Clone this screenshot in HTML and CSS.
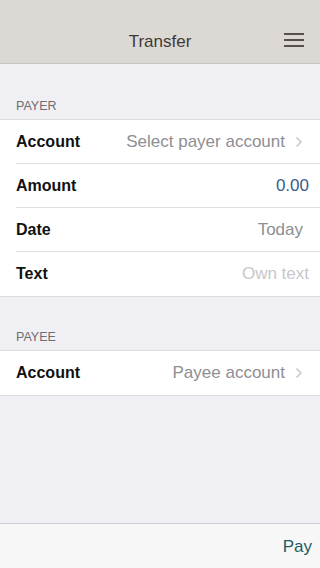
FILE: index.html
```html
<!DOCTYPE html>
<html lang="en">
<head>
  <meta charset="UTF-8">
  <meta name="viewport" content="width=device-width, initial-scale=1.0">
  <title>Transfer</title>
  <link rel="stylesheet" href="styles.css">
</head>
<body>
  <div class="screen">
    <header class="navbar">
      <h1 class="navbar-title">Transfer</h1>
      <button class="menu-btn" aria-label="Menu">
        <span></span><span></span><span></span>
      </button>
    </header>

    <main class="content">
      <h2 class="section-label">PAYER</h2>
      <ul class="group">
        <li class="row">
          <span class="row-label">Account</span>
          <span class="row-value">Select payer account</span>
          <svg class="chevron" width="8" height="12" viewBox="0 0 8 12"><polyline points="1.5,1.5 6,6 1.5,10.5"/></svg>
        </li>
        <li class="row">
          <span class="row-label">Amount</span>
          <span class="row-value row-value-amount">0.00</span>
        </li>
        <li class="row">
          <span class="row-label">Date</span>
          <span class="row-value row-value-date">Today</span>
        </li>
        <li class="row">
          <span class="row-label">Text</span>
          <span class="row-value row-value-placeholder">Own text</span>
        </li>
      </ul>

      <h2 class="section-label">PAYEE</h2>
      <ul class="group">
        <li class="row">
          <span class="row-label">Account</span>
          <span class="row-value">Payee account</span>
          <svg class="chevron" width="8" height="12" viewBox="0 0 8 12"><polyline points="1.5,1.5 6,6 1.5,10.5"/></svg>
        </li>
      </ul>
    </main>

    <footer class="toolbar">
      <button class="pay-btn">Pay</button>
    </footer>
  </div>
</body>
</html>
```

FILE: styles.css
```css
*{
  box-sizing: border-box;
}

html, body{
  margin: 0;
  padding: 0;
}

body{
  font-family: "Liberation Sans", Arial, sans-serif;
  background: #efeff4;
}

.screen{
  display: flex;
  flex-direction: column;
  height: 568px;
  width: 320px;
}

/* top bar */
.navbar{
  position: relative;
  display: flex;
  align-items: center;
  justify-content: center;
  height: 64px;
  padding-top: 21px;
  background: #dcd9d4;
  border-bottom: 1px solid #c9c6c1;
}
.navbar-title{
  margin: 0;
  font-size: 17px;
  font-weight: normal;
  color: #3f3935;
}
.menu-btn{
  position: absolute;
  right: 16px;
  top: 33px;
  display: flex;
  flex-direction: column;
  gap: 4px;
  width: 20px;
  padding: 0;
  border: none;
  background: none;
}
.menu-btn span{
  display: block;
  height: 2px;
  background: #55504b;
}

.content{
  flex: 1;
  padding-top: 35px;
}

.section-label{
  margin: 0;
  padding: 0 16px 6px;
  font-size: 12.5px;
  font-weight: normal;
  color: #6d6d72;
  line-height: 14px;
}

.group{
  list-style: none;
  margin: 0 0 33px;
  padding: 0;
  background: #fff;
  border-top: 1px solid #dcdce0;
  border-bottom: 1px solid #dcdce0;
}

.row{
  position: relative;
  display: flex;
  align-items: center;
  height: 44px;
  padding: 0 11px 0 16px;
}
.row + .row::before{
  content: '';
  position: absolute;
  left: 16px;
  right: 0;
  top: -1px;
  border-top: 1px solid #e0e0e4;
}

.row-label{
  flex: 1;
  font-size: 16px;
  font-weight: bold;
  color: #111;
}
.row-value{
  font-size: 17px;
  color: #8e8e93;
}
.row-value-amount{
  color: #3b5b8c;
}
.row-value-date{
  padding-right: 6px;
}
.row-value-placeholder{
  color: #c7c7cd;
}

.chevron{
  margin: 0 6px 0 10px;
  fill: none;
  stroke: #c7c7cc;
  stroke-width: 1.5;
}

/* bottom bar */
.toolbar{
  display: flex;
  align-items: center;
  justify-content: flex-end;
  height: 45px;
  padding: 2px 8px 0;
  background: #f7f7f7;
  border-top: 1px solid #cfcfd2;
}
.pay-btn{
  padding: 0;
  border: none;
  background: none;
  font-family: inherit;
  font-size: 17px;
  color: #1d5c66;
}
```
